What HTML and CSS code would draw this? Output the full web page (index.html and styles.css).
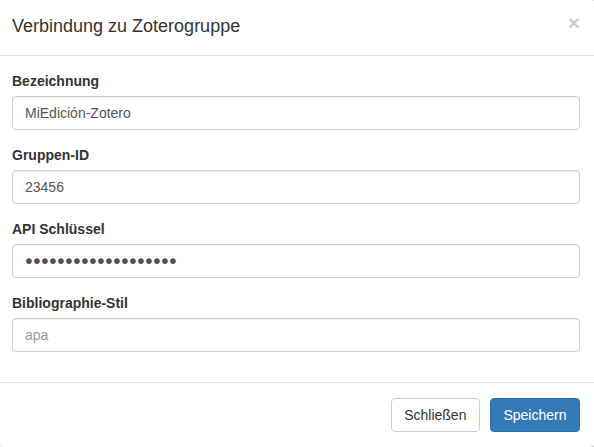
FILE: index.html
```html
<!DOCTYPE html>
<html lang="de">
<head>
<meta charset="utf-8">
<title>Verbindung zu Zoterogruppe</title>
<link rel="stylesheet" href="styles.css">
</head>
<body>
<div class="modal-content">
  <div class="modal-header">
    <h4 class="modal-title">Verbindung zu Zoterogruppe</h4>
    <button type="button" class="close" aria-label="Close">×</button>
  </div>
  <form class="modal-body">
    <div class="form-group">
      <label class="control-label" for="f-name">Bezeichnung</label>
      <input class="form-control" id="f-name" type="text" value="MiEdición-Zotero">
    </div>
    <div class="form-group">
      <label class="control-label" for="f-id">Gruppen-ID</label>
      <input class="form-control" id="f-id" type="text" value="23456">
    </div>
    <div class="form-group">
      <label class="control-label" for="f-key">API Schlüssel</label>
      <input class="form-control form-control-secret" id="f-key" type="password" value="abcdefghijklmnopqrs">
    </div>
    <div class="form-group">
      <label class="control-label" for="f-style">Bibliographie-Stil</label>
      <input class="form-control" id="f-style" type="text" placeholder="apa">
    </div>
  </form>
  <div class="modal-footer">
    <button type="button" class="btn btn-default">Schließen</button>
    <button type="button" class="btn btn-primary">Speichern</button>
  </div>
</div>
</body>
</html>
```
FILE: styles.css
```css
* {
  box-sizing: border-box;
}

html, body {
  margin: 0;
  padding: 0;
  background: #fff;
  overflow: hidden;
}

body {
  font-family: "Liberation Sans", Arial, Helvetica, sans-serif;
  font-size: 14px;
  line-height: 1.42857143;
  color: #333;
}

.modal-content {
  width: 600px;
  margin: -2px 0 0 -4px;
  background: #fff;
  border: 1px solid rgba(0, 0, 0, 0.2);
  border-radius: 6px;
  box-shadow: 0 3px 9px rgba(0, 0, 0, 0.5);
}

.modal-header {
  display: flex;
  justify-content: space-between;
  align-items: flex-start;
  padding: 15px;
  border-bottom: 1px solid #e5e5e5;
}

.modal-title {
  margin: 0;
  font-size: 18px;
  font-weight: 500;
  line-height: 1.42857143;
  color: #333;
}

.close {
  margin-top: -2px;
  padding: 0;
  border: 0;
  background: transparent;
  font-family: "Liberation Sans", Arial, sans-serif;
  font-size: 21px;
  font-weight: bold;
  line-height: 1;
  color: #000;
  text-shadow: 0 1px 0 #fff;
  opacity: 0.2;
  cursor: pointer;
}

.modal-body {
  display: block;
  margin: 0;
  padding: 15px;
}

.form-group {
  margin-bottom: 15px;
}

.control-label {
  display: block;
  max-width: 100%;
  margin-bottom: 5px;
  font-weight: bold;
}

.form-control {
  display: block;
  width: 100%;
  height: 34px;
  padding: 6px 12px;
  font-family: inherit;
  font-size: 14px;
  line-height: 1.42857143;
  color: #555;
  background: #fff;
  border: 1px solid #ccc;
  border-radius: 4px;
  box-shadow: inset 0 1px 1px rgba(0, 0, 0, 0.075);
  outline: none;
}

.form-control-secret {
  padding-left: 10px;
  font-family: "DejaVu Sans", sans-serif;
  font-size: 20px;
  line-height: 20px;
  letter-spacing: -3.8px;
}

.form-control::placeholder {
  color: #999;
  opacity: 1;
}

.modal-footer {
  display: flex;
  justify-content: flex-end;
  gap: 10px;
  padding: 15px;
  border-top: 1px solid #e5e5e5;
}

.btn {
  display: inline-block;
  padding: 6px 12.5px;
  font-family: inherit;
  font-size: 14px;
  font-weight: normal;
  line-height: 1.42857143;
  text-align: center;
  white-space: nowrap;
  border: 1px solid transparent;
  border-radius: 4px;
  cursor: pointer;
}

.btn-default {
  color: #333;
  background: #fff;
  border-color: #ccc;
}

.btn-primary {
  color: #fff;
  background: #337ab7;
  border-color: #2e6da4;
}
```
